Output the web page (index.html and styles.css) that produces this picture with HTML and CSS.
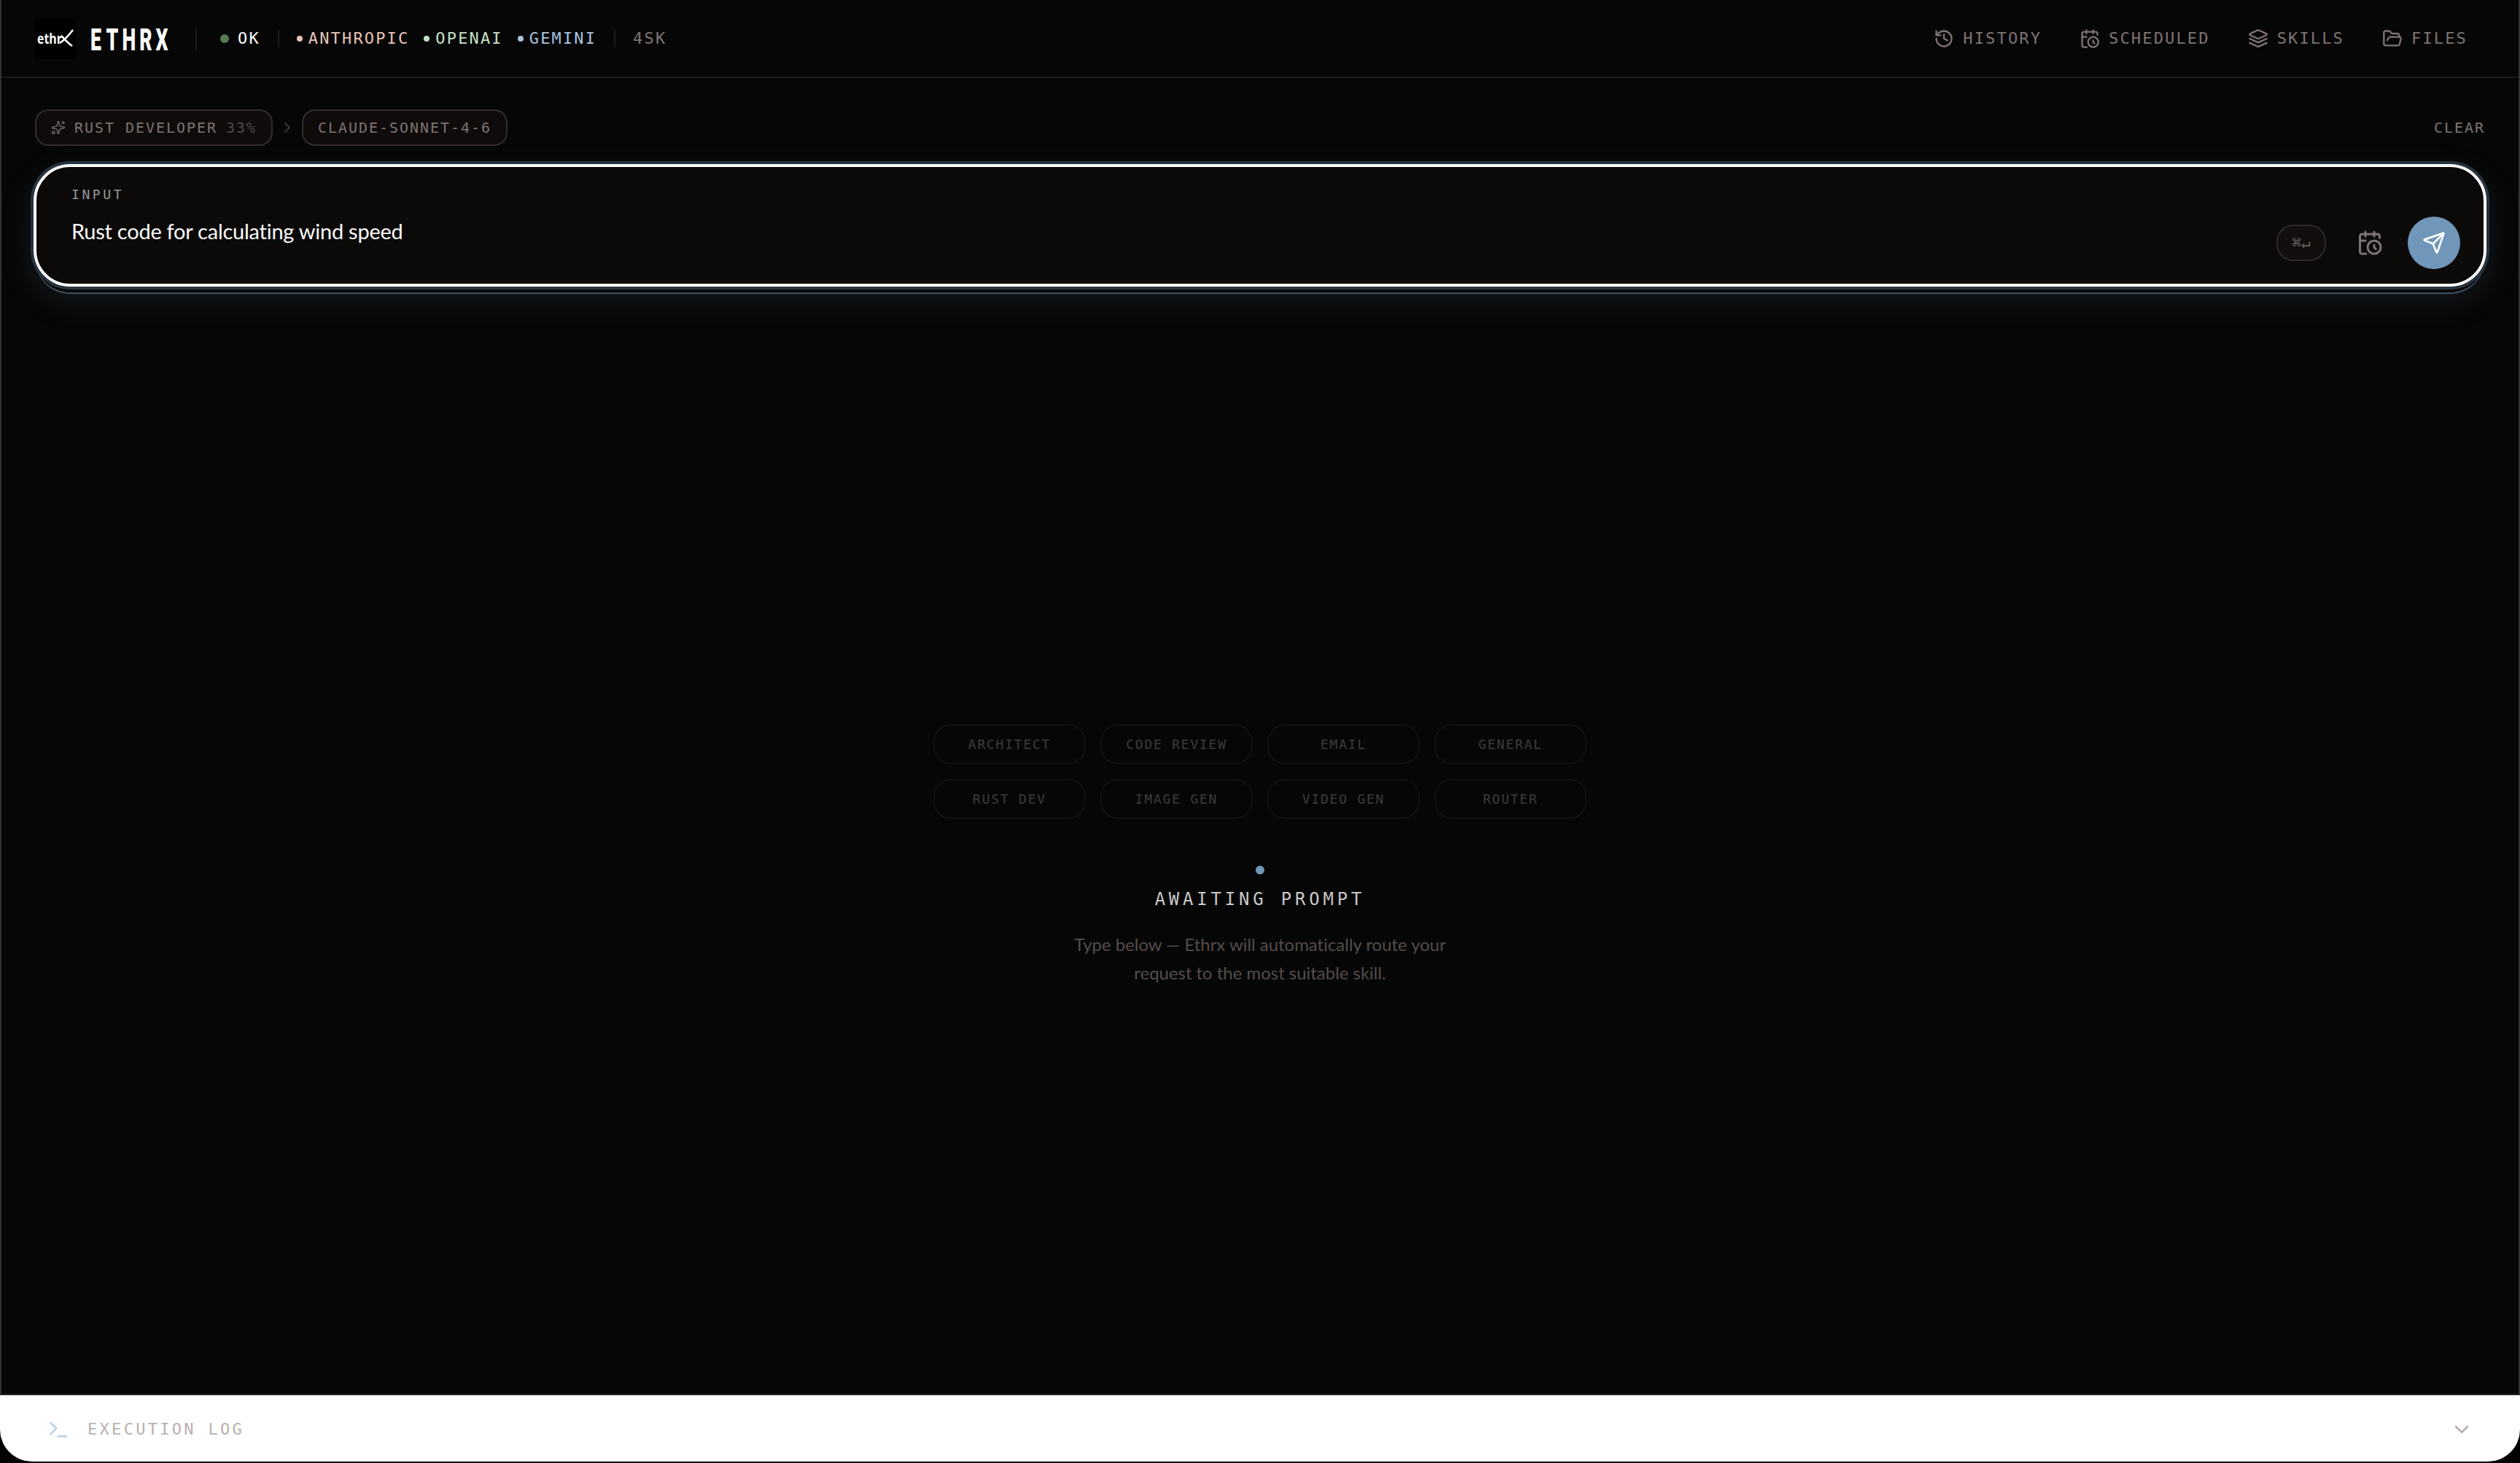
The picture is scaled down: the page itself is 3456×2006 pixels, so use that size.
FILE: index.html
```html
<!DOCTYPE html>
<html lang="en">
<head>
<meta charset="UTF-8">
<meta name="viewport" content="width=device-width, initial-scale=1.0">
<title>ETHRX</title>
<link rel="stylesheet" href="styles.css">
</head>
<body>
<div class="app">
    <header class="header">
        <svg class="logo" viewBox="0 0 56 56">
            <text class="logo-text" x="3" y="35" textLength="34" lengthAdjust="spacingAndGlyphs">ethr</text>
            <path d="M52 16C46 24 40 30 34 34M36 24C41 29 45 34 51 38" />
        </svg>
        <svg class="wordmark" viewBox="0 -8 120 60">
            <text transform="scale(.62 1)" x="0 34.5 70 108.5 144.5" y="38">ETHRX</text>
        </svg>
        <span class="divider tall"></span>
        <span class="status"><i class="dot"></i>OK</span>
        <span class="divider"></span>
        <div class="providers">
            <span class="provider anthropic"><i></i>ANTHROPIC</span>
            <span class="provider openai"><i></i>OPENAI</span>
            <span class="provider gemini"><i></i>GEMINI</span>
        </div>
        <span class="divider"></span>
        <span class="skill-count">4SK</span>

        <nav class="nav">
            <a class="nav-item">
                <svg class="icon" viewBox="0 0 24 24"><path d="M3 12a9 9 0 1 0 9-9 9.75 9.75 0 0 0-6.74 2.74L3 8"/><path d="M3 3v5h5"/><path d="M12 7v5l4 2"/></svg>
                HISTORY
            </a>
            <a class="nav-item">
                <svg class="icon" viewBox="0 0 24 24"><path d="M21 7.5V6a2 2 0 0 0-2-2H5a2 2 0 0 0-2 2v14a2 2 0 0 0 2 2h3.5"/><path d="M16 2v4M8 2v4M3 10h5M17.5 17.5 16 16.3V14"/><circle cx="16" cy="16" r="6"/></svg>
                SCHEDULED
            </a>
            <a class="nav-item">
                <svg class="icon" viewBox="0 0 24 24"><path d="m12.83 2.18a2 2 0 0 0-1.66 0L2.6 6.08a1 1 0 0 0 0 1.83l8.58 3.91a2 2 0 0 0 1.66 0l8.58-3.9a1 1 0 0 0 0-1.83Z"/><path d="m22 12-9.17 4.16a2 2 0 0 1-1.66 0L2 12"/><path d="m22 17-9.17 4.16a2 2 0 0 1-1.66 0L2 17"/></svg>
                SKILLS
            </a>
            <a class="nav-item">
                <svg class="icon" viewBox="0 0 24 24"><path d="m6 14 1.5-2.9A2 2 0 0 1 9.24 10H20a2 2 0 0 1 1.94 2.5l-1.54 6a2 2 0 0 1-1.95 1.5H4a2 2 0 0 1-2-2V5a2 2 0 0 1 2-2h3.9a2 2 0 0 1 1.69.9l.81 1.2a2 2 0 0 0 1.67.9H18a2 2 0 0 1 2 2v2"/></svg>
                FILES
            </a>
        </nav>
    </header>

    <section class="composer">
        <div class="route">
            <span class="chip">
                <svg class="icon sparkles" viewBox="0 0 24 24"><path d="M11.017 2.814a1 1 0 0 1 1.966 0l1.051 5.558a2 2 0 0 0 1.594 1.594l5.558 1.051a1 1 0 0 1 0 1.966l-5.558 1.051a2 2 0 0 0-1.594 1.594l-1.051 5.558a1 1 0 0 1-1.966 0l-1.051-5.558a2 2 0 0 0-1.594-1.594l-5.558-1.051a1 1 0 0 1 0-1.966l5.558-1.051a2 2 0 0 0 1.594-1.594z"/><path d="M20 2v4M22 4h-4"/><circle cx="4" cy="20" r="2"/></svg>
                RUST DEVELOPER
                <span class="percent">33%</span>
            </span>
            <svg class="icon arrow" viewBox="0 0 24 24"><path d="m9 18 6-6-6-6"/></svg>
            <span class="chip">CLAUDE-SONNET-4-6</span>
            <span class="clear">CLEAR</span>
        </div>

        <div class="prompt">
            <div class="prompt-field">
                <div class="prompt-label">INPUT</div>
                <div class="prompt-text">Rust code for calculating wind speed</div>
            </div>
            <div class="prompt-actions">
                <span class="kbd">⌘↵</span>
                <svg class="icon schedule" viewBox="0 0 24 24"><path d="M21 7.5V6a2 2 0 0 0-2-2H5a2 2 0 0 0-2 2v14a2 2 0 0 0 2 2h3.5"/><path d="M16 2v4M8 2v4M3 10h5M17.5 17.5 16 16.3V14"/><circle cx="16" cy="16" r="6"/></svg>
                <span class="send">
                    <svg class="icon" viewBox="0 0 24 24"><path d="M14.536 21.686a.5.5 0 0 0 .937-.024l6.5-19a.496.496 0 0 0-.635-.635l-19 6.5a.5.5 0 0 0-.024.937l7.93 3.18a2 2 0 0 1 1.112 1.11z"/><path d="m21.854 2.147-10.94 10.939"/></svg>
                </span>
            </div>
        </div>
    </section>

    <main class="empty">
        <div class="skills">
            <span>ARCHITECT</span>
            <span>CODE REVIEW</span>
            <span>EMAIL</span>
            <span>GENERAL</span>
            <span>RUST DEV</span>
            <span>IMAGE GEN</span>
            <span>VIDEO GEN</span>
            <span>ROUTER</span>
        </div>
        <i class="pulse"></i>
        <h1>AWAITING PROMPT</h1>
        <p>Type below — Ethrx will automatically route your</p>
        <p>request to the most suitable skill.</p>
    </main>
</div>

<footer class="log">
    <svg class="icon terminal" viewBox="0 0 24 24"><path d="m4 17 6-6-6-6"/><path d="M12 19h8"/></svg>
    <span>EXECUTION LOG</span>
    <svg class="icon toggle" viewBox="0 0 24 24"><path d="m6 9 6 6 6-6"/></svg>
</footer>
</body>
</html>
```

FILE: styles.css
```css
* {
    box-sizing: border-box;
}
body {
    margin: 0;
    height: 2006px;
    padding-bottom: 2px;
    display: flex;
    flex-direction: column;
    background: #010003;
    color: #7f7473;
    font-family: "DejaVu Sans Mono", monospace;
    font-size: 22px;
    letter-spacing: 2.15px;
    white-space: nowrap;
    overflow: hidden;
}
.app {
    flex: 1;
    display: flex;
    flex-direction: column;
    background: #060606;
    border-left: 2px solid #333;
    border-right: 2px solid #333;
}
.icon {
    width: 28px;
    height: 28px;
    flex: none;
    fill: none;
    stroke: currentColor;
    stroke-width: 2;
    stroke-linecap: round;
    stroke-linejoin: round;
}

/* Header */
.header {
    height: 107px;
    padding: 0 46px;
    display: flex;
    align-items: center;
    border-bottom: 2px solid #1b1b1b;
}
.logo {
    width: 56px;
    height: 56px;
    background: #000;
}
.logo-text {
    fill: #fff;
    font: bold 20px "Open Sans", sans-serif;
    letter-spacing: 0;
}
.logo path {
    fill: none;
    stroke: #fff;
    stroke-width: 2.6;
}
.wordmark {
    width: 120px;
    height: 60px;
    margin: 0 -8px 0 20px;
    fill: #fafafa;
    font: 900 43px Roboto, sans-serif;
    letter-spacing: 0;
}
.divider {
    width: 2px;
    height: 24px;
    margin: 0 24px;
    background: #1b1b1b;
}
.divider.tall {
    height: 32px;
    margin: 0 32px;
}
.status {
    display: flex;
    align-items: center;
    gap: 12px;
    color: #fafafa;
}
.dot {
    width: 12px;
    height: 12px;
    border-radius: 50%;
    background: #547b50;
}
.providers {
    display: flex;
    gap: 20px;
}
.provider {
    display: flex;
    align-items: center;
    gap: 8px;
}
.provider i {
    width: 8px;
    height: 8px;
    border-radius: 50%;
    background: currentColor;
}
.anthropic {
    color: #e8c4b8;
}
.openai {
    color: #c5e1c5;
}
.gemini {
    color: #a9c4e0;
}
.nav {
    display: flex;
    gap: 4px;
    margin-left: auto;
}
.nav-item {
    display: flex;
    align-items: center;
    gap: 12px;
    padding: 0 24px;
}

/* Route + prompt */
.composer {
    padding: 43px 46px 52px;
}
.route {
    display: flex;
    align-items: center;
    font-size: 20px;
    letter-spacing: 1.96px;
}
.chip {
    height: 50px;
    padding: 0 20px;
    display: flex;
    align-items: center;
    gap: 12px;
    border: 2px solid #322e2d;
    border-radius: 18px;
    background: #0f0b0a;
}
.sparkles {
    width: 20px;
    height: 20px;
    opacity: 0.8;
}
.percent {
    color: #4e4646;
}
.arrow {
    width: 24px;
    height: 24px;
    margin: 0 8px;
    color: #3c3837;
}
.clear {
    margin-left: auto;
}
.prompt {
    height: 164px;
    margin-top: 27px;
    padding: 0 32px 20px 48px;
    display: flex;
    justify-content: space-between;
    align-items: flex-end;
    border: 2px solid #fff;
    border-radius: 48px;
    background: #0b0a09;
    box-shadow: inset 0 -2px 0 #050404, 0 0 0 2px #fff, 0 0 0 6px #27333e, 0 10px 0 #090807, 0 12px 0 #3f5266, 0 16px 48px rgba(112, 150, 185, 0.18);
}
.prompt-field {
    align-self: flex-start;
    padding-top: 27px;
}
.prompt-label {
    font-size: 18px;
    line-height: 22px;
    letter-spacing: 0.2em;
    color: #999897;
}
.prompt-text {
    margin-top: 19px;
    color: #fafafa;
    font: 29px/40px Lato, sans-serif;
    letter-spacing: -0.25px;
}
.prompt-actions {
    display: flex;
    align-items: center;
}
.kbd {
    width: 68px;
    height: 50px;
    display: flex;
    align-items: center;
    justify-content: center;
    border: 2px solid #2d2a29;
    border-radius: 23px;
    background: #120e0d;
    color: #6a605f;
    font-size: 21px;
    letter-spacing: 0;
}
.schedule {
    width: 36px;
    height: 36px;
    margin: 0 34px 0 42px;
}
.send {
    width: 72px;
    height: 72px;
    display: flex;
    align-items: center;
    justify-content: center;
    border-radius: 50%;
    background: #7096b9;
    color: #fff;
}
.send .icon {
    width: 32px;
    height: 32px;
}

/* Empty state */
.empty {
    flex: 1;
    display: flex;
    flex-direction: column;
    align-items: center;
    padding-top: 550px;
}
.skills {
    width: 896px;
    display: grid;
    grid-template-columns: repeat(4, 1fr);
    gap: 20px;
}
.skills span {
    height: 55px;
    display: flex;
    align-items: center;
    justify-content: center;
    border: 2px solid #111;
    border-radius: 24px;
    color: #3c3c3c;
    font-size: 18px;
    letter-spacing: 1.76px;
}
.pulse {
    width: 12px;
    height: 12px;
    margin-top: 64px;
    border-radius: 50%;
    background: #7096b9;
}
.empty h1 {
    margin: 18px 0 26px;
    color: #c8c8c8;
    font-size: 24px;
    font-weight: normal;
    line-height: 32px;
    letter-spacing: 0.2em;
}
.empty p {
    margin: 0;
    color: #544c4b;
    font: 24px/39px Lato, sans-serif;
    letter-spacing: -0.03px;
}

/* Execution log */
.log {
    height: 93px;
    padding: 4px 64px 0;
    display: flex;
    align-items: center;
    border-radius: 0 0 44px 44px;
    background: linear-gradient(#222 2px, #f4f2f2 2px, #f4f2f2 4px, #fff 4px);
    color: #b9b0af;
    letter-spacing: 0.15em;
}
.log .icon {
    width: 32px;
    height: 32px;
}
.terminal {
    margin-right: 24px;
    color: #bdd0e3;
}
.toggle {
    margin-left: auto;
}
```
